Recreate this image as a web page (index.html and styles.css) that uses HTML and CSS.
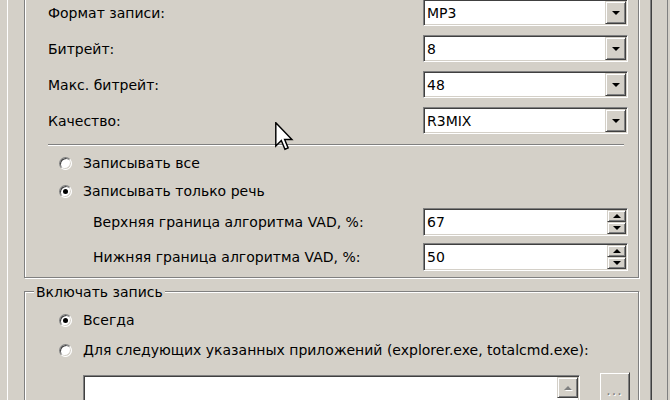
FILE: index.html
```html
<!DOCTYPE html>
<html lang="ru">
<head>
<meta charset="utf-8">
<title>Запись</title>
<link rel="stylesheet" href="styles.css">
</head>
<body>
<div class="screen">
  <div class="tab">
    <div class="group g1">
      <div class="rows">
        <div class="row">
          <span class="label">Формат записи:</span>
          <div class="combo"><span class="value">MP3</span><span class="btn3d drop"><i class="tri-down"></i></span></div>
        </div>
        <div class="row">
          <span class="label">Битрейт:</span>
          <div class="combo"><span class="value">8</span><span class="btn3d drop"><i class="tri-down"></i></span></div>
        </div>
        <div class="row">
          <span class="label">Макс. битрейт:</span>
          <div class="combo"><span class="value">48</span><span class="btn3d drop"><i class="tri-down"></i></span></div>
        </div>
        <div class="row">
          <span class="label">Качество:</span>
          <div class="combo"><span class="value">R3MIX</span><span class="btn3d drop"><i class="tri-down"></i></span></div>
        </div>
      </div>
      <div class="sep"></div>
      <div class="radios">
        <div class="radio-row"><span class="radio"></span><span>Записывать все</span></div>
        <div class="radio-row"><span class="radio checked"></span><span>Записывать только речь</span></div>
      </div>
      <div class="rows vad">
        <div class="row tall">
          <span class="label sub">Верхняя граница алгоритма VAD, %:</span>
          <div class="combo spin"><span class="value">67</span><span class="spinbtns"><span class="btn3d sbtn"><i class="tri-up"></i></span><span class="btn3d sbtn"><i class="tri-down"></i></span></span></div>
        </div>
        <div class="row tall">
          <span class="label sub">Нижняя граница алгоритма VAD, %:</span>
          <div class="combo spin"><span class="value">50</span><span class="spinbtns"><span class="btn3d sbtn"><i class="tri-up"></i></span><span class="btn3d sbtn"><i class="tri-down"></i></span></span></div>
        </div>
      </div>
    </div>

    <div class="group g2">
      <span class="legend">Включать запись</span>
      <div class="radios r2">
        <div class="radio-row"><span class="radio checked"></span><span>Всегда</span></div>
        <div class="radio-row"><span class="radio"></span><span>Для следующих указанных приложений (explorer.exe, totalcmd.exe):</span></div>
      </div>
      <div class="listrow">
        <div class="listbox"><span class="btn3d sb-up"><i class="tri-up dis"></i></span></div>
        <div class="btn3d dots">...</div>
      </div>
    </div>
  </div>
  <div class="edge"></div>
  <svg class="cursor" width="19" height="29" viewBox="0 0 13 20" aria-hidden="true">
    <path d="M0.5 0.5 V16.5 L4.3 12.8 L6.8 18.8 L9 17.9 L6.6 12 H11.6 Z" fill="#fff" stroke="#000" stroke-width="1" stroke-linejoin="miter"/>
  </svg>
</div>
</body>
</html>
```

FILE: styles.css
```css
* { box-sizing: border-box; }

html, body {
  margin: 0;
  padding: 0;
  background: #d4d0c8;
}

body {
  font-family: "DejaVu Sans", "Liberation Sans", sans-serif;
  font-size: 14px;
  color: #000;
}

.screen {
  position: relative;
  width: 670px;
  height: 400px;
  overflow: hidden;
  display: flex;
  padding-left: 7px;
  background: #d4d0c8;
}

.tab {
  flex: none;
  width: 645px;
  height: 100%;
  border-left: 1px solid #fff;
  border-right: 1px solid #404040;
  box-shadow: inset -1px 0 0 #808080;
  padding: 0 12px 0 16px;
}

.edge {
  flex: none;
  margin-left: 15px;
  width: 3px;
  height: 100%;
  border-left: 1px solid #808080;
}

.group {
  position: relative;
  border: 1px solid #808080;
  box-shadow: inset 1px 1px 0 #fff, 1px 1px 0 #fff;
}

.g1 {
  border-top: none;
  margin-top: -1px;
  padding: 0 10px 6px 23px;
}

.rows {
  display: flex;
  flex-direction: column;
  gap: 9px;
}

.rows.vad {
  gap: 7px;
  margin-top: 7px;
}

.row {
  display: flex;
  align-items: center;
  height: 27px;
}

.row.tall { height: 28px; }

.label {
  flex: 1;
  white-space: nowrap;
}

.label.sub { padding-left: 45px; }

.combo {
  flex: none;
  width: 205px;
  height: 100%;
  display: flex;
  padding: 1px;
  background: #fff;
  border: 1px solid;
  border-color: #808080 #fff #fff #808080;
  box-shadow: inset 1px 1px 0 #404040, inset -1px -1px 0 #d4d0c8;
}

.value {
  flex: 1;
  display: flex;
  align-items: center;
  padding-left: 2px;
  white-space: nowrap;
}

.btn3d {
  background: #d4d0c8;
  border: 1px solid;
  border-color: #d4d0c8 #404040 #404040 #d4d0c8;
  box-shadow: inset 1px 1px 0 #fff, inset -1px -1px 0 #808080;
  display: flex;
  align-items: center;
  justify-content: center;
}

.drop {
  width: 21px;
  height: 100%;
}

.tri-down {
  display: block;
  width: 0;
  height: 0;
  border-left: 4px solid transparent;
  border-right: 4px solid transparent;
  border-top: 4px solid #000;
}

.tri-up {
  display: block;
  width: 0;
  height: 0;
  border-left: 4px solid transparent;
  border-right: 4px solid transparent;
  border-bottom: 4px solid #000;
}

.tri-up.dis {
  border-bottom-color: #808080;
  filter: drop-shadow(1px 1px 0 #fff);
}

.spinbtns {
  width: 19px;
  display: flex;
  flex-direction: column;
}

.sbtn {
  flex: 1;
}

.sep {
  margin: 10px 4px 0 0;
  border-top: 1px solid #808080;
  border-bottom: 1px solid #fff;
}

.radios {
  display: flex;
  flex-direction: column;
  gap: 8px;
  margin-top: 7px;
  padding-left: 11px;
}

.radio-row {
  display: flex;
  align-items: center;
  gap: 11px;
  height: 20px;
  white-space: nowrap;
}

.radio {
  flex: none;
  position: relative;
  width: 13px;
  height: 13px;
  border-radius: 50%;
  background: #fff;
  border: 1px solid;
  border-color: #808080 #fff #fff #808080;
  box-shadow: inset 1px 1px 0 #404040, inset -1px -1px 0 #d4d0c8;
}

.radio.checked::after {
  content: "";
  position: absolute;
  left: 3px;
  top: 3px;
  width: 5px;
  height: 5px;
  border-radius: 50%;
  background: #000;
}

.g2 {
  margin-top: 13px;
  padding: 18px 0 0 0;
  height: 120px;
}

.legend {
  position: absolute;
  left: 9px;
  top: -8px;
  padding: 0 2px;
  line-height: 16px;
  background: #d4d0c8;
  white-space: nowrap;
}

.r2 {
  margin-top: 0;
  gap: 10px;
  padding-left: 34px;
}

.listrow {
  display: flex;
  align-items: flex-start;
  margin-top: 12px;
  padding-left: 58px;
}

.listbox {
  flex: none;
  width: 497px;
  height: 40px;
  margin-top: 3px;
  display: flex;
  justify-content: flex-end;
  padding: 1px;
  background: #fff;
  border: 1px solid;
  border-color: #808080 #fff #fff #808080;
  box-shadow: inset 1px 1px 0 #404040, inset -1px -1px 0 #d4d0c8;
}

.sb-up {
  width: 21px;
  height: 21px;
}

.dots {
  flex: none;
  margin-left: 19px;
  width: 31px;
  height: 30px;
  color: #808080;
  text-shadow: 1px 1px 0 #fff;
  letter-spacing: 1px;
  padding-top: 6px;
}

.cursor {
  position: absolute;
  left: 275px;
  top: 122px;
}
```
